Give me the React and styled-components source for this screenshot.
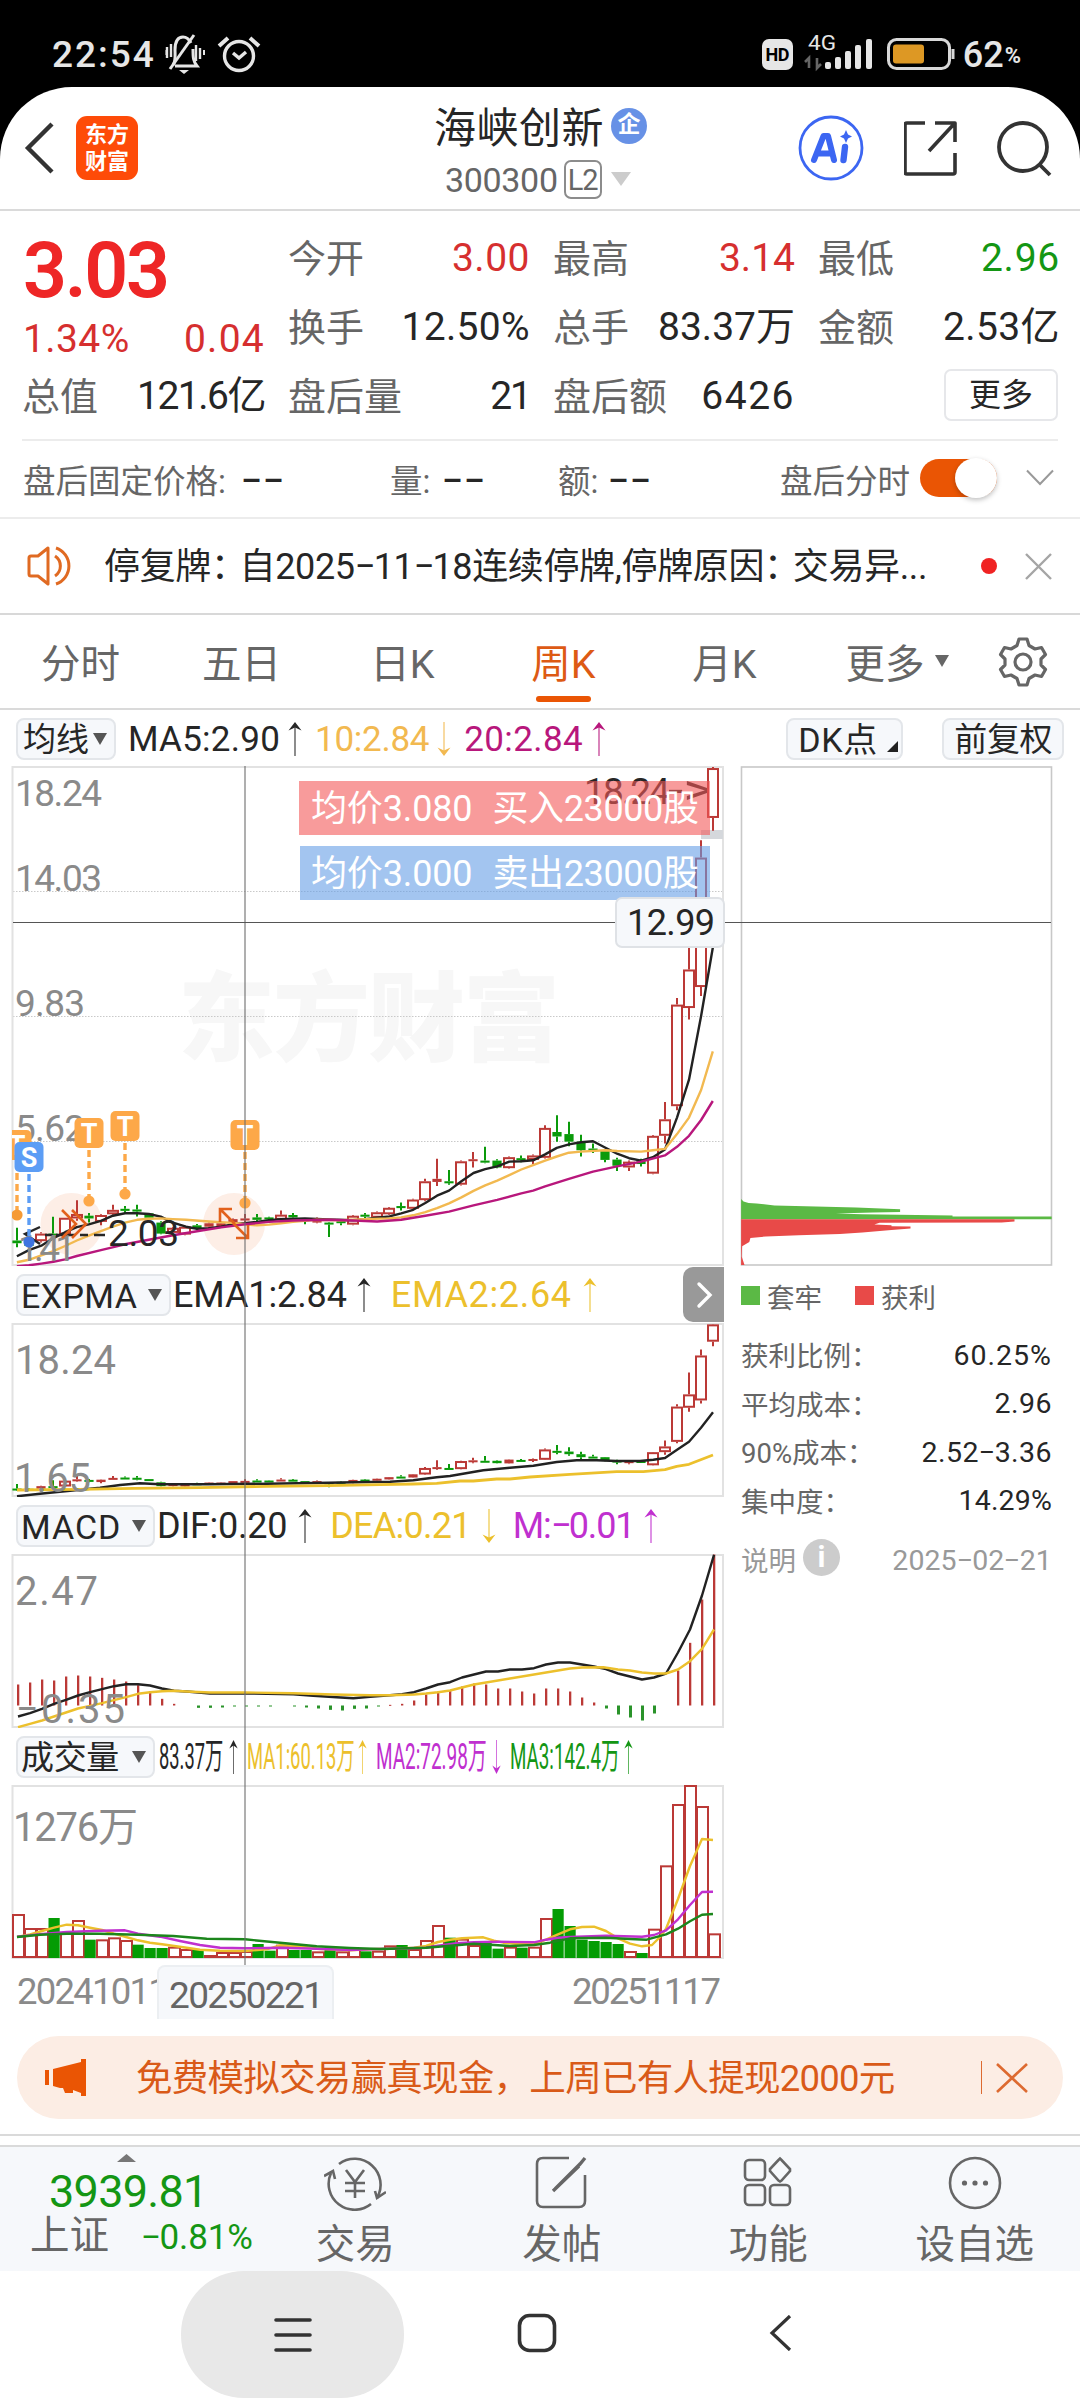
import React, { useLayoutEffect, useRef, useState } from 'react';
import styled, { createGlobalStyle, css } from 'styled-components';

const C = {
  ink: '#262626', gray: '#666', mute: '#8a8a8a', red: '#d62f2f', green: '#149614',
  orange: '#ea5504', amber: '#f2b950', magenta: '#b8177c', yellow: '#ecc02c', violet: '#c030cf',
  candleRed: '#bb3936', candleGreen: '#0a9a0a', panel: '#f6f8fb', frame: '#e2e2e2',
};

const Global = createGlobalStyle`
  * { box-sizing: border-box; }
  html, body { margin: 0; background: #fff; }
  body, text { font-family: Roboto, "Noto Sans CJK SC", sans-serif; }
`;

/* ---------- text helpers ---------- */
const FitOuter = styled.span`
  display: inline-block; white-space: nowrap; flex: none;
  font-size: ${p => p.$size}px; line-height: ${p => p.$lh || 1.2};
  font-weight: ${p => p.$weight || 400};
  color: ${p => p.$color || 'inherit'};
  padding-top: ${p => p.$drop ?? 3}px;
  margin-left: ${p => p.$ml || 0}px;
  margin-right: ${p => p.$mr || 0}px;
  ${p => p.$squeeze && css`width: ${p.$w}px;`}
`;
const FitInner = styled.span`display: inline-block; transform-origin: 0 50%; white-space: nowrap;`;

function Fit({ w, size, children, squeeze, ...rest }) {
  const ref = useRef(null);
  const [style, setStyle] = useState({});
  useLayoutEffect(() => {
    const el = ref.current;
    const natural = el.offsetWidth;
    const n = el.textContent.length;
    setStyle(squeeze ? { transform: `scaleX(${w / natural})` } : { letterSpacing: `${(w - natural) / n}px` });
  }, [w, squeeze]);
  return (
    <FitOuter
      $size={size} $w={w} $squeeze={squeeze} $color={rest.color} $ml={rest.ml} $mr={rest.mr}
      $weight={rest.weight} $lh={rest.lh} $drop={rest.drop}
    >
      <FitInner ref={ref} style={style}>{children}</FitInner>
    </FitOuter>
  );
}

const DashGlyph = styled.span`
  display: inline-block; transform: translateY(-0.06em) scaleX(1.75); margin: 0 .12em 0 .14em;
`;
const Dash = () => <DashGlyph>-</DashGlyph>;
const TightColon = styled.span`margin-right: -7px;`;

/* ---------- shell ---------- */
const Page = styled.div`width: 1080px; height: 2400px; background: #000; overflow: hidden; display: flex; flex-direction: column;`;
const StatusBar = styled.header`
  height: 87px; flex: none; color: #e6e6e6; display: flex; justify-content: space-between; align-items: flex-start;
  padding: 31px 56px 0 52px;
`;
const StatusGroup = styled.div`display: flex; align-items: center; height: 46px;`;
const Sheet = styled.main`flex: 1; background: #fff; border-radius: 72px 72px 0 0; display: flex; flex-direction: column;`;

const HdBadge = styled.span`
  width: 31px; height: 31px; border-radius: 7px; background: #e6e6e6; color: #000; font-weight: 700; font-size: 18px;
  display: flex; align-items: center; justify-content: center; letter-spacing: -.3px;
`;

/* ---------- header ---------- */
const Header = styled.div`
  height: 124px; border-bottom: 2px solid #dadada; display: grid; grid-template-columns: 360px 1fr 360px; flex: none;
`;
const HeaderLeft = styled.div`display: flex; align-items: center; padding: 0 0 0 22px; gap: 20px;`;
const Logo = styled.div`
  width: 62px; height: 64px; border-radius: 11px; background: #fe4b08; color: #fff; font-weight: 700; font-size: 22px; line-height: 27px;
  display: flex; flex-direction: column; align-items: center; justify-content: center;
`;
const HeaderMid = styled.div`padding-top: 19px; padding-left: 74px;`;
const TitleRow = styled.div`display: flex; align-items: center; height: 44px; gap: 7px; color: ${C.ink};`;
const Verified = styled.span`
  width: 36px; height: 36px; border-radius: 50%; background: #6791e6; color: #fff; font-weight: 700; font-size: 23px;
  line-height: 34px; text-align: center; margin-top: -4px;
`;
const CodeRow = styled.div`display: flex; align-items: center; height: 58px; padding: 0 0 0 11px; color: ${C.gray};`;
const Level = styled.span`
  width: 38px; height: 39px; border: 2px solid #8c8c8c; border-radius: 7px; font-size: 29px; line-height: 36px; text-align: center;
  margin: 0 9px 0 6px; letter-spacing: -1px;
`;
const HeaderRight = styled.div`display: flex; align-items: center; padding-left: 78px; gap: 40px;`;

/* ---------- quote ---------- */
const Quote = styled.section`
  height: 230px; margin: 0 22px; padding-top: 11px; border-bottom: 2px solid #ececec; flex: none;
  display: grid; grid-template-columns: 241px 240px 240px 240px; column-gap: 25px; grid-template-rows: 69px 69px 69px;
`;
const Cell = styled.div`display: flex; justify-content: space-between; align-items: center; font-size: 38px; color: ${C.gray}; white-space: nowrap; padding-bottom: 2px;`;
const PriceCell = styled.div`grid-row: 1 / 3; display: flex; flex-direction: column; color: ${C.red};`;
const PriceMain = styled.div`height: 92px; display: flex; align-items: center; color: #ee2626;`;
const PriceSub = styled.div`height: 46px; display: flex; align-items: center; justify-content: space-between;`;
const MoreBtn = styled.button`
  margin: 0 0 0 auto; width: 114px; height: 52px; border: 2px solid #e6e7ea; border-radius: 7px; background: #fff; color: ${C.ink};
  font: 32px/46px Roboto, "Noto Sans CJK SC", sans-serif; padding: 0; position: relative; top: 1px;
`;

const AfterHours = styled.section`
  height: 78px; border-bottom: 2px solid #ececec; display: grid; align-items: center; flex: none; font-size: 32.5px; color: ${C.gray};
  grid-template-columns: 367px 168px 222px 140px 106px 1fr; padding: 0 0 2px 23px; white-space: nowrap;
`;
const Blank = styled.b`color: ${C.ink}; font-weight: 500; font-size: 35px; line-height: 30px; margin-left: ${p => p.$gap}px; letter-spacing: 1px;`;
const Toggle = styled.div`
  width: 77px; height: 38px; border-radius: 19px; background: ${C.orange}; display: flex; justify-content: flex-end; align-items: center;
`;
const Knob = styled.div`width: 42px; height: 40px; border-radius: 50%; background: #fff; box-shadow: 0 2px 5px rgba(0,0,0,.25);`;

const Notice = styled.section`
  height: 96px; border-bottom: 2px solid #d8d8d8; display: flex; align-items: center; flex: none; padding-left: 26px; color: ${C.ink};
`;
const RedDot = styled.i`width: 16px; height: 16px; border-radius: 50%; background: #f02323; margin: 0 28px 0 54px;`;

const Tabs = styled.nav`
  height: 95px; border-bottom: 2px solid #dadada; display: grid; grid-template-columns: repeat(5, 161px) 184px 1fr; flex: none;
`;
const Tab = styled.div`
  position: relative; display: flex; align-items: center; justify-content: center; gap: 10px; font-size: 39.5px; padding-bottom: 2px;
  color: ${p => (p.$active ? '#dd5a14' : C.gray)};
  &::after { content: ''; display: ${p => (p.$active ? 'block' : 'none')}; position: absolute; bottom: 6px; left: 53px; width: 55px; height: 6px; border-radius: 3px; background: ${C.orange}; }
`;
const TabIcon = styled.div`display: flex; align-items: center; padding-left: 9px;`;

/* ---------- chart area ---------- */
const MaRow = styled.div`height: 56px; display: flex; align-items: center; padding: 1px 0 0 16px; flex: none;`;
const Pill = styled.span`
  height: 42px; width: ${p => p.$w}px; background: ${C.panel}; border: 2px solid #e3e6ea; border-radius: 8px; flex: none;
  display: flex; align-items: center; justify-content: space-between; padding: 0 ${p => p.$pr ?? 7}px 0 ${p => p.$pl ?? 3}px;
  margin-left: ${p => p.$ml || 0}px; color: ${C.ink};
`;
const ChartArea = styled.section`position: relative; height: 1253px; display: flex; flex: none;`;
const LeftCol = styled.div`width: 724px; display: flex; flex-direction: column;`;
const IndRow = styled.div`height: 57px; display: flex; align-items: center; padding: 0 0 0 16px; flex: none;`;
const Plot = styled.svg`display: block; flex: none; overflow: hidden;`;
const RightCol = styled.aside`width: 356px; padding-left: 16px;`;
const Legend = styled.div`display: flex; align-items: center; height: 59px; color: ${C.gray}; font-size: 27.5px; padding-left: 1px;`;
const Swatch = styled.i`width: 19px; height: 19px; background: ${p => p.$c}; margin: 0 7px 0 ${p => p.$ml || 0}px;`;
const Stat = styled.div`
  display: flex; align-items: center; justify-content: space-between; height: 48.5px; width: 312px; font-size: 27.5px;
  color: ${p => p.$c || C.gray}; padding-left: 1px; white-space: nowrap;
`;
const StatBlock = styled.div`padding-top: 5px;`;
const StatFoot = styled.div`padding-top: 11px;`;
const InfoLabel = styled.span`display: flex; align-items: center; gap: 7px;`;
const InfoDot = styled.i`
  width: 37px; height: 37px; border-radius: 50%; background: #ccc; color: #fff; font: 700 30px/36px Roboto, sans-serif; text-align: center; margin-top: -4px;
`;

const VLine = styled.div`position: absolute; left: 244px; top: 0; width: 2px; height: 1199px; background: rgba(110,110,110,.55);`;
const HLine = styled.div`position: absolute; left: 13px; top: 156px; width: 1038px; height: 1px; background: #555;`;
const TradeFlag = styled.div`
  position: absolute; left: ${p => p.$x}px; top: ${p => p.$y}px; width: ${p => 710 - p.$x}px; height: 54px; padding-left: ${p => 311 - p.$x}px;
  background: ${p => p.$bg}; color: #fff; display: flex; align-items: center;
`;
const PriceTag = styled.div`
  position: absolute; left: 615px; top: 131px; width: 110px; height: 51px; border: 2px solid #dfe2e6; border-radius: 7px; background: ${C.panel};
  display: flex; align-items: center; padding-left: 10px; color: ${C.ink};
`;
const NextBtn = styled.div`
  position: absolute; left: 683px; top: 501px; width: 41px; height: 55px; background: #999; border-radius: 10px 0 0 10px;
  display: flex; align-items: center; justify-content: center;
`;
const Dates = styled.div`height: 60px; padding: 2px 5px 0 17px; display: flex; justify-content: space-between; align-items: center; color: ${C.mute};`;
const DateTag = styled.div`
  position: absolute; left: 157px; top: 1199px; width: 177px; height: 54px; border: 2px solid #eceff2; border-bottom: 0; border-radius: 8px 8px 0 0;
  background: ${C.panel}; display: flex; align-items: center; padding: 3px 0 0 10px; color: ${C.gray};
`;

/* ---------- footer ---------- */
const Promo = styled.div`
  margin: 17px 17px 0; height: 83px; border-radius: 42px; background: #fcede4; flex: none; display: flex; align-items: center; padding-left: 28px;
`;
const Divider = styled.i`width: 1px; height: 33px; background: #dd6a30; margin: 0 14px 0 86px;`;
const Strip = styled.div`height: 13px; margin-top: 15px; border-top: 2px solid #dadada; border-bottom: 2px solid #dadada; flex: none;`;
const BottomBar = styled.footer`height: 124px; background: ${C.panel}; display: grid; grid-template-columns: 252px repeat(4, 206.5px); flex: none;`;
const IndexBox = styled.div`padding: 7px 0 0 0; display: flex; flex-direction: column;`;
const IndexCaret = styled.div`height: 8px; padding-left: 117px; display: flex;`;
const IndexVal = styled.div`height: 52px; display: flex; align-items: center; padding: 5px 0 0 49px;`;
const IndexRow = styled.div`
  display: flex; align-items: center; height: 44px; padding: 0 0 0 30px; color: ${C.gray}; font-size: 39.5px; line-height: 44px; white-space: nowrap;
`;
const NavItem = styled.div`
  display: flex; flex-direction: column; align-items: center; color: ${C.gray}; font-size: 39.5px; line-height: 44px; padding-top: 8px;
  svg { height: 56px; margin-bottom: 12px; flex: none; }
`;
const SysNav = styled.div`height: 130px; background: #fff; display: flex; flex: none; padding-left: 181px;`;
const SysPill = styled.div`
  width: 223px; height: 127px; border-radius: 63px; background: #e8e8e8; display: flex; align-items: center; justify-content: center;
`;
const SysKey = styled.div`width: ${p => p.$w}px; height: 124px; display: flex; align-items: center; justify-content: center;`;

/* ---------- small drawings ---------- */
const Down = ({ w = 14, h = 12, c = '#555' }) => <svg width={w} height={h} viewBox="0 0 14 12" preserveAspectRatio="none"><path d="M0 0H14L7 12Z" fill={c} /></svg>;

const ArrowBox = styled.svg`flex: none; margin-left: ${p => p.$ml}px;`;
const Arrow = ({ ml, dir = 'up', c = C.ink, w = 14 }) => (
  <ArrowBox $ml={ml} width={w} height="34" viewBox="0 0 14 34" preserveAspectRatio="none">
    <g transform={dir === 'up' ? undefined : 'rotate(180 7 17)'}>
      <path d="M7 2V34" stroke={c} strokeWidth="1.4" opacity=".75" />
      <path d="M0.5 8.5L7 0L13.5 8.5L7 5.5Z" fill={c} />
    </g>
  </ArrowBox>
);
const Cross = ({ w, h, c, sw = 2.4 }) => (
  <svg width={w} height={h} viewBox={`0 0 ${w} ${h}`}><path d={`M1 1L${w - 1} ${h - 1}M${w - 1} 1L1 ${h - 1}`} stroke={c} strokeWidth={sw} /></svg>
);

/* ---------- data ---------- */
// [colour, bodyTop, bodyBottom, high, low] in ticks: 47 is the top price, 1495 the bottom price
const CANDLES = [
  ['g',1422,1430,1385,1442],['g',1424,1438,1420,1440],['r',1402,1424,1398,1428],['g',1402,1408,1353,1412],['r',1356,1405,1356,1405],
  ['r',1345,1358,1305,1365],['g',1350,1358,1342,1370],['r',1348,1368,1346,1378],['r',1333,1346,1318,1348],['g',1330,1336,1322,1342],
  ['g',1332,1338,1318,1352],['g',1343,1356,1343,1358],['g',1370,1402,1366,1404],['r',1385,1400,1383,1402],['r',1382,1405,1380,1407],
  ['g',1378,1388,1374,1390],['r',1372,1382,1370,1386],['r',1372,1380,1370,1382],['r',1360,1372,1358,1374],['r',1358,1364,1345,1375],
  ['g',1355,1362,1345,1368],['g',1355,1360,1353,1363],['r',1347,1362,1335,1364],['g',1348,1355,1342,1358],['g',1360,1364,1358,1375],
  ['r',1360,1370,1355,1372],['g',1370,1375,1368,1412],['g',1366,1370,1362,1378],['r',1350,1376,1348,1378],['g',1347,1353,1342,1358],
  ['r',1340,1356,1338,1358],['r',1327,1346,1325,1348],['g',1322,1328,1312,1335],['r',1303,1330,1301,1332],['r',1250,1305,1243,1308],
  ['r',1243,1252,1185,1264],['g',1250,1256,1217,1260],['r',1192,1260,1190,1262],['r',1186,1191,1165,1210],['g',1190,1196,1150,1198],
  ['g',1190,1210,1186,1212],['r',1180,1212,1178,1214],['g',1183,1188,1175,1195],['r',1175,1188,1172,1200],['r',1095,1182,1087,1184],
  ['g',1107,1120,1058,1135],['g',1113,1135,1077,1148],['g',1135,1160,1115,1178],['g',1155,1159,1140,1168],['g',1160,1188,1158,1195],
  ['g',1187,1205,1182,1220],['r',1193,1210,1190,1220],['g',1192,1200,1185,1207],['r',1118,1228,1116,1230],['r',1070,1118,1020,1140],
  ['r',737,1032,718,1044],['r',635,747,453,780],['r',310,686,260,712],['r',50,195,47,232],
];
const MA5 = [49,1468,84,1450,120,1437,155,1415,189,1398,223,1383,258,1375,293,1365,328,1350,363,1343,398,1343,432,1345,467,1353,502,1370,540,1382,572,1388,607,1386,642,1382,677,1375,711,1372,746,1368,781,1363,816,1360,885,1358,955,1361,1025,1363,1060,1360,1095,1356,1131,1352,1165,1343,1200,1333,1235,1313,1269,1292,1304,1277,1340,1250,1375,1226,1409,1215,1444,1207,1479,1193,1514,1192,1548,1189,1583,1172,1617,1153,1652,1143,1687,1137,1722,1134,1757,1152,1792,1170,1827,1183,1862,1190,1896,1180,1931,1158,1966,1065,2001,955,2036,770,2070,572];
const MA10 = [49,1485,84,1478,120,1465,155,1453,189,1438,223,1422,258,1408,293,1395,328,1382,363,1370,398,1362,432,1359,467,1358,502,1360,540,1362,607,1367,677,1371,711,1375,746,1378,781,1376,816,1372,851,1368,920,1362,990,1363,1060,1360,1131,1358,1165,1355,1200,1349,1235,1340,1269,1328,1304,1314,1340,1297,1375,1278,1409,1262,1444,1248,1479,1232,1514,1216,1548,1203,1583,1190,1617,1178,1652,1167,1687,1164,1757,1160,1792,1162,1862,1164,1896,1160,1931,1156,1966,1113,2001,1065,2036,985,2070,873];
const MA20 = [49,1497,84,1494,120,1489,155,1484,189,1477,223,1467,293,1450,363,1433,432,1420,502,1407,572,1395,642,1384,711,1375,781,1368,851,1364,955,1362,1025,1364,1095,1367,1165,1362,1235,1350,1304,1338,1375,1320,1444,1304,1514,1285,1548,1277,1583,1265,1652,1243,1722,1222,1792,1207,1862,1193,1931,1175,1966,1150,2001,1118,2036,1072,2070,1017];
const EMA1 = [51,706,120,698,180,692,240,686,300,680,360,672,420,667,480,670,620,670,800,668,985,665,1110,663,1170,662,1240,658,1310,649,1350,645,1450,628,1530,620,1600,614,1670,603,1730,598,1790,598,1850,600,1920,600,1960,596,1995,591,2030,567,2067,542,2103,500,2139,454];
const EMA2 = [51,687,240,685,400,682,600,680,800,676,985,674,1140,671,1240,669,1310,667,1380,660,1420,660,1490,654,1530,654,1590,648,1710,640,1850,632,1930,632,1995,626,2030,616,2067,610,2139,582];
const HIST = [102,96,87,90,78,75,78,82,87,93,104,122,145,160,165,172,172,171,168,167,167,167,165,167,171,174,178,180,175,174,168,163,160,150,132,123,120,108,99,102,114,114,123,129,114,114,123,141,156,174,192,201,210,189,165,60,-23,-153,-288];
const DIF = [54,198,90,188,126,175,162,160,198,148,234,135,270,125,306,116,342,107,378,101,414,101,450,105,486,114,522,121,560,123,630,129,735,129,880,131,940,136,1010,140,1060,143,1110,139,1170,134,1206,131,1242,125,1278,114,1314,102,1350,95,1386,81,1422,72,1458,63,1494,63,1530,57,1566,57,1602,53,1638,42,1674,36,1710,36,1746,42,1782,48,1818,56,1854,69,1890,78,1926,87,1962,81,1998,69,2034,6,2070,-63,2106,-165,2142,-287];
const DEA = [54,230,90,220,126,210,162,198,198,186,234,174,270,166,306,158,342,149,378,140,414,130,450,125,486,122,522,121,560,123,630,126,735,126,880,128,1000,132,1110,134,1170,134,1242,132,1278,129,1314,125,1350,120,1386,111,1422,102,1458,96,1530,84,1602,72,1674,60,1710,54,1746,51,1810,50,1854,57,1890,60,1926,66,1962,69,1998,69,2034,57,2070,32,2106,-5,2142,-63];
const VOL = 'r792 r834 r834 g801 r848 r810 g866 r868 r862 r870 g881 g891 g891 r890 r897 g897 r915 r906 r906 r903 g879 g899 r884 g897 g897 r904 g897 r904 r897 g901 r902 r886 g882 r897 r870 r825 g860 r866 r885 g875 g893 r890 g890 r890 r804 g774 g825 g866 g870 g873 g879 r903 g906 r836 r646 r462 r405 r468 r850'
  .split(' ').map(s => [s[0], +s.slice(1)]);
const V1 = [51,858,90,850,126,840,162,830,200,821,234,823,270,830,306,837,342,848,378,858,414,868,450,875,486,880,560,890,600,896,660,899,735,900,800,895,840,883,900,886,950,893,1050,898,1110,895,1170,893,1242,890,1278,885,1314,873,1350,866,1386,862,1450,859,1482,869,1510,875,1560,880,1602,880,1638,866,1674,850,1710,835,1746,828,1782,827,1818,840,1854,862,1890,878,1926,886,1956,882,1980,858,1998,833,2034,744,2070,645,2106,564,2139,567];
const V2 = [51,857,120,850,200,843,300,839,375,838,414,848,480,857,540,870,600,882,660,890,735,892,840,890,950,893,1050,897,1110,895,1170,893,1278,890,1314,884,1370,877,1422,874,1494,872,1602,874,1638,866,1674,860,1710,858,1818,854,1926,857,1962,852,1998,838,2034,805,2070,762,2106,723,2139,722];
const V3 = [51,858,120,851,200,848,300,848,414,851,520,855,620,863,735,865,840,875,950,886,1050,891,1140,894,1170,893,1278,890,1386,881,1422,878,1482,882,1530,885,1602,882,1650,875,1710,862,1818,860,1890,864,1940,866,1998,850,2034,833,2070,811,2106,791,2139,789];

const K = 2.904;
const cx = i => 17 + i * 12;
const line = (pts, sx, y) => {
  let s = '';
  for (let i = 0; i < pts.length; i += 2) s += `${(pts[i] / sx).toFixed(1)},${y(pts[i + 1]).toFixed(1)} `;
  return s;
};
const Line = ({ pts, sx, y, c, w = 2.4 }) => <polyline points={line(pts, sx, y)} fill="none" stroke={c} strokeWidth={w} strokeLinejoin="round" />;
const Frame = ({ h }) => <rect x="12.5" y="1" width="710.5" height={h - 2} fill="none" stroke={C.frame} strokeWidth="2" />;

function Candles({ y }) {
  return CANDLES.map(([k, a, b, hi, lo], i) => {
    const c = k === 'r' ? C.candleRed : C.candleGreen;
    const top = y(a), bot = Math.max(y(b), top + 2), x = cx(i);
    const hollow = k === 'r' && bot - top > 4.2;
    return (
      <g key={i} stroke={c} strokeWidth="2">
        {y(hi) < top && <path d={`M${x} ${y(hi)}V${top}`} />}
        {y(lo) > bot && <path d={`M${x} ${bot}V${y(lo)}`} />}
        {hollow
          ? <rect x={x - 5} y={top + 1} width="10" height={bot - top - 2} fill="#fff" />
          : <rect x={x - 4.6} y={top} width="9.2" height={bot - top} fill={c} stroke="none" />}
      </g>
    );
  });
}

const SvgText = ({ x, y, w, size, c = C.mute, children, ...o }) => (
  <text x={x} y={y} fontSize={size} fill={c} textLength={w} lengthAdjust="spacing" {...o}>{children}</text>
);

function Marker({ x, y, dot, t = 'T', c = '#fda848', dc = c }) {
  return (
    <g>
      <path d={`M${x} ${y + 17}V${dot}`} stroke={c} strokeWidth="3.4" strokeDasharray="7 4" />
      <circle cx={x} cy={dot} r="5.6" fill={dc} />
      <rect x={x - 14.5} y={y - 15} width="29" height="30" rx="5" fill={c} />
      <text x={x} y={y + 9.5} fontSize="27" fontWeight="700" fill="#fff" textAnchor="middle">{t}</text>
    </g>
  );
}

function PriceChart() {
  const y = v => (v - 47) / K + 1;
  return (
    <Plot width="724" height="500" viewBox="0 0 724 500">
      <text x="178" y="287" fontSize="97" fontWeight="900" fill="#f7f7f7" textLength="382">东方财富</text>
      {[125, 250, 375].map(v => <path key={v} d={`M13 ${v + 0.5}H722`} stroke="#c9c9c9" strokeWidth="1" strokeDasharray="1.5 1.5" />)}
      <Frame h={500} />
      <SvgText x="15" y="40" w={87} size={37}>18.24</SvgText>
      <SvgText x="15" y="125" w={87} size={37}>14.03</SvgText>
      <SvgText x="15" y="249.5" w={70} size={37}>9.83</SvgText>
      <SvgText x="15" y="374.5" w={70} size={37}>5.62</SvgText>
      <circle cx="71.5" cy="458" r="31" fill="#fdeee6" />
      <circle cx="234" cy="458" r="31" fill="#fdeee6" />
      <rect x="701" y="64" width="22" height="9" fill="#d5d8dc" />
      <SvgText x="584" y="38" w={86} size={37} c={C.ink}>18.24</SvgText>
      <text x="668" y="38" fontSize="43" fill={C.ink} textLength="44" lengthAdjust="spacingAndGlyphs">-&gt;</text>
      <Candles y={y} />
      <Line pts={MA5} sx={K} y={y} c="#222" />
      <Line pts={MA10} sx={K} y={y} c={C.amber} />
      <Line pts={MA20} sx={K} y={y} c={C.magenta} w={2.4} />
      <path d="M40 461L25 468L40 478M45 469H53M56 469H75M80 469H88M94 469H105" fill="none" stroke={C.ink} strokeWidth="2.4" />
      <SvgText x="108" y="480" w={71} size={37} c={C.ink}>2.03</SvgText>
      <SvgText x="18" y="495" w={58} size={37}>1.41</SvgText>
      <g fill="none" stroke="#e2611c" strokeWidth="2.6">
        <path d="M62 444L76 458L62 472M72 444L86 458L72 472" />
        <path d="M220 456V443H232M221 444L235 458M248 459V472H236M247 471L233 457" />
      </g>
      <svg x="12" y="0" width="712" height="500" viewBox="12 0 712 500">
        <Marker x={17} y={379} dot={449} dc="#f59a35" />
      </svg>
      <Marker x={29} y={391} dot={476} t="S" c="#5c9df5" dc="#3f74e0" />
      <Marker x={89} y={367} dot={435} />
      <Marker x={125} y={360} dot={428} />
      <Marker x={245} y={369} dot={437} />
    </Plot>
  );
}

function ExpmaChart() {
  const y = v => (v - 189) / 3 + 1;
  return (
    <Plot width="724" height="174" viewBox="0 0 724 174">
      <Frame h={174} />
      <SvgText x="15" y="51" w={101} size={40}>18.24</SvgText>
      <Candles y={v => ((v - 47) / K) * 0.3475 + 1} />
      <Line pts={EMA1} sx={3} y={y} c="#222" />
      <Line pts={EMA2} sx={3} y={y} c={C.yellow} w={2.8} />
      <SvgText x="14" y="169" w={77} size={40}>1.65</SvgText>
    </Plot>
  );
}

function MacdChart() {
  const y = v => v / 3 + 96.5;
  return (
    <Plot width="724" height="174" viewBox="0 0 724 174">
      <Frame h={174} />
      <SvgText x="15" y="51" w={83} size={40}>2.47</SvgText>
      {HIST.map((v, i) => v !== 165 && (
        <rect key={i} x={cx(i)} y={Math.min(y(v), 151.5)} width={v > 165 ? 3 : 2.3} height={Math.max(1, Math.abs(y(v) - 151.5))}
          fill={v < 165 ? C.candleRed : '#2a932a'} />
      ))}
      <Line pts={DIF} sx={3} y={y} c="#222" />
      <Line pts={DEA} sx={3} y={y} c={C.yellow} w={2.4} />
      <SvgText x="16" y="168.5" w={109} size={40}>−0.35</SvgText>
    </Plot>
  );
}

function VolumeChart() {
  const y = v => (v - 405) / 3 + 1;
  return (
    <Plot width="724" height="174" viewBox="0 0 724 174">
      <Frame h={174} />
      <SvgText x="13" y="56" w={125} size={40}>1276万</SvgText>
      {VOL.map(([k, v], i) => k === 'r'
        ? <rect key={i} x={cx(i) - 4} y={y(v)} width="11" height={172 - y(v)} fill="#fff" stroke={C.candleRed} strokeWidth="2" />
        : <rect key={i} x={cx(i) - 4.5} y={y(v)} width="11.2" height={173 - y(v)} fill="#049c04" />)}
      <Line pts={V1} sx={3} y={y} c={C.yellow} />
      <Line pts={V2} sx={3} y={y} c={C.violet} />
      <Line pts={V3} sx={3} y={y} c="#1c861c" />
    </Plot>
  );
}

const GREEN_CHIPS = [583,1303,590,1310,605,1315,628,1316,680,1322,800,1325,917,1328,1045,1333,1045,1341,965,1342,858,1345,935,1347,1197,1351,1197,1354,1485,1354,1485,1362,583,1362];
const RED_CHIPS = [583,1362,1377,1362,1377,1368,1340,1371,985,1372,970,1377,1020,1379,1020,1382,1075,1383,1075,1389,1020,1393,935,1400,870,1405,750,1408,655,1412,610,1416,607,1428,586,1440,585,1470,593,1495,583,1495];
function ChipChart() {
  const map = p => { let s = ''; for (let i = 0; i < p.length; i += 2) s += `${(p[i] / K - 199.7).toFixed(1)},${((p[i + 1] - 47) / K + 0.5).toFixed(1)} `; return s; };
  return (
    <Plot width="313" height="500" viewBox="0 0 313 500">
      <rect x="1.5" y="1" width="310" height="498" fill="none" stroke="#c8c8c8" strokeWidth="1.6" />
      <polygon points={map(GREEN_CHIPS)} fill="#5bb945" />
      <polygon points={map(RED_CHIPS)} fill="#e84a48" />
    </Plot>
  );
}

/* ---------- sections ---------- */
function Status() {
  return (
    <StatusBar>
      <StatusGroup>
        <Fit w={104} size={37} weight={500}>22:54</Fit>
        <svg width="50" height="42" viewBox="-2 0 50 42" fill="none" stroke="#e6e6e6" strokeWidth="3">
          <path d="M15 32C18 28 17 22 17 17C17 8 20 4 25 4C29 4 31 6 33 10M35 16C35 24 35 28 39 33H17" />
          <path d="M36 2L12 36" />
          <path d="M21 37H31L26 41Z" fill="#e6e6e6" stroke="none" />
          <path d="M9 14V25M13 11V24M38 12V28M42 15V26" strokeWidth="2.4" /><path d="M8.5 17V22M46 17V22" strokeWidth="2" />
        </svg>
        <svg width="60" height="42" viewBox="-2 0 60 42" fill="none" stroke="#e6e6e6" strokeWidth="3.4">
          <circle cx="31" cy="23" r="14.5" /><path d="M25 20L31 25L38 19" /><path d="M11 13L20 5M51 13L42 5" strokeWidth="4" />
        </svg>
      </StatusGroup>
      <StatusGroup>
        <HdBadge>HD</HdBadge>
        <svg width="94" height="46" viewBox="0 0 94 46">
          <text x="15" y="19" fontSize="21" fill="#e6e6e6" textLength="28" lengthAdjust="spacingAndGlyphs">4G</text>
          <path d="M16 37V27L12 31M24 27V37L28 33" stroke="#666" strokeWidth="2.6" fill="none" />
          {[[32, 31], [42, 26], [52, 20], [62, 14], [73, 8]].map(([x, y]) => <rect key={x} x={x} y={y} width="6" height={38 - y} rx="2" fill="#e6e6e6" />)}
        </svg>
        <svg width="76" height="32" viewBox="0 0 76 32">
          <rect x="1.5" y="1.5" width="61" height="29" rx="8" fill="none" stroke="#d8d8d8" strokeWidth="3" />
          <rect x="6" y="6.5" width="31" height="19" rx="3" fill="#dd9824" /><path d="M66 11V21" stroke="#d8d8d8" strokeWidth="3" />
        </svg>
        <Fit w={41} size={36} weight={500}>62</Fit>
        <Fit w={19} size={22} weight={700} ml={1} lh={2.05}>%</Fit>
      </StatusGroup>
    </StatusBar>
  );
}

function Head() {
  return (
    <Header>
      <HeaderLeft>
        <svg width="34" height="54" viewBox="0 0 34 54"><path d="M30 3L6 27L30 51" fill="none" stroke="#333" strokeWidth="4.4" /></svg>
        <Logo><span>东方</span><span>财富</span></Logo>
      </HeaderLeft>
      <HeaderMid>
        <TitleRow><Fit w={170} size={42}>海峡创新</Fit><Verified>企</Verified></TitleRow>
        <CodeRow><Fit w={113} size={34}>300300</Fit><Level>L2</Level><Down w={20} h={14} c="#ccc" /></CodeRow>
      </HeaderMid>
      <HeaderRight>
        <svg width="66" height="66" viewBox="0 0 66 66">
          <circle cx="33" cy="33" r="31" fill="#fff" stroke="#3c66f2" strokeWidth="2.8" />
          <path d="M16 45L25.5 21H30L36 45M19.5 38.5H33" fill="none" stroke="#3c66f2" strokeWidth="6" strokeLinejoin="round" strokeLinecap="round" />
          <path d="M47 32L45.500 45" fill="none" stroke="#3c66f2" strokeWidth="6.4" strokeLinecap="round" />
          <path d="M48 15L50 19.500L54 21.500L50 23.500L48 28L46 23.500L42 21.500L46 19.500Z" fill="#3c66f2" />
        </svg>
        <svg width="53" height="56" viewBox="1 0 53 56" fill="none" stroke="#333" strokeWidth="3.6" strokeLinejoin="round">
          <path d="M22 3H4Q2 3 2 5V52Q2 54 4 54H50Q52 54 52 52V33" /><path d="M32 3H52V22M51 4L26 31" />
        </svg>
        <svg width="58" height="58" viewBox="1 0 58 58" fill="none" stroke="#333" strokeWidth="3.8">
          <circle cx="27" cy="28" r="24" /><path d="M43 45L54 56" />
        </svg>
      </HeaderRight>
    </Header>
  );
}

const Num = ({ w, c = C.ink, ml, mr = -2 }) => null;
const Value = ({ w, c = C.ink, ml, mr = -2, children }) => <Fit w={w} size={39} color={c} ml={ml} mr={mr} drop={5}>{children}</Fit>;

function QuoteBlock() {
  return (
    <Quote>
      <PriceCell>
        <PriceMain><Fit w={145} size={77} weight={600} ml={1} drop={7}>3.03</Fit></PriceMain>
        <PriceSub><Value w={107} ml={1} c={C.red}>1.34%</Value><Value w={81} c={C.red}>0.04</Value></PriceSub>
      </PriceCell>
      <Cell>今开<Value w={78} c={C.red}>3.00</Value></Cell>
      <Cell>最高<Value w={76} c={C.red}>3.14</Value></Cell>
      <Cell>最低<Value w={79} c={C.green}>2.96</Value></Cell>
      <Cell>换手<Value w={129}>12.50%</Value></Cell>
      <Cell>总手<Value w={137}>83.37万</Value></Cell>
      <Cell>金额<Value w={117}>2.53亿</Value></Cell>
      <Cell>总值<Value w={128}>121.6亿</Value></Cell>
      <Cell>盘后量<Value w={40}>21</Value></Cell>
      <Cell>盘后额<Value w={94}>6426</Value></Cell>
      <Cell><MoreBtn>更多</MoreBtn></Cell>
    </Quote>
  );
}

const Empty = ({ gap = 12 }) => <Blank $gap={gap}><Dash /><Dash /></Blank>;

function Charts() {
  return (
    <>
      <MaRow>
        <Pill $w={100} $pl={5}><Fit w={66} size={33}>均线</Fit><Down /></Pill>
        <Fit w={152} size={35} ml={12} color={C.ink}>MA5:2.90</Fit><Arrow ml={8} />
        <Fit w={114} size={35} ml={13} color={C.amber}>10:2.84</Fit><Arrow ml={8} dir="down" c={C.amber} />
        <Fit w={119} size={35} ml={13} color={C.magenta}>20:2.84</Fit><Arrow ml={9} c={C.magenta} />
        <Pill $w={117} $ml={180} $pl={10} $pr={3}>
          <Fit w={80} size={34}>DK点</Fit>
          <svg width="11" height="26"><path d="M11 15V26H0Z" fill="#222" /></svg>
        </Pill>
        <Pill $w={122} $ml={39} $pl={10}><Fit w={98} size={33}>前复权</Fit></Pill>
      </MaRow>
      <ChartArea>
        <LeftCol>
          <PriceChart />
          <IndRow>
            <Pill $w={155}><Fit w={116} size={34}>EXPMA</Fit><Down /></Pill>
            <Fit w={174} size={36} ml={2} color={C.ink}>EMA1:2.84</Fit><Arrow ml={10} />
            <Fit w={181} size={36} ml={20} color={C.yellow}>EMA2:2.64</Fit><Arrow ml={11} c={C.yellow} />
          </IndRow>
          <ExpmaChart />
          <IndRow>
            <Pill $w={139}><Fit w={100} size={34}>MACD</Fit><Down /></Pill>
            <Fit w={130} size={36} ml={2} color={C.ink}>DIF:0.20</Fit><Arrow ml={11} />
            <Fit w={140} size={36} ml={18} color={C.yellow}>DEA:0.21</Fit><Arrow ml={11} dir="down" c={C.yellow} />
            <Fit w={122} size={36} ml={17} color={C.violet}>M:<Dash />0.01</Fit><Arrow ml={10} c={C.violet} />
          </IndRow>
          <MacdChart />
          <IndRow>
            <Pill $w={139}><Fit w={98} size={33}>成交量</Fit><Down /></Pill>
            <Fit squeeze w={64} size={36} ml={4} color={C.ink}>83.37万</Fit><Arrow ml={6} w={9} />
            <Fit squeeze w={108} size={36} ml={9} color={C.yellow}>MA1:60.13万</Fit><Arrow ml={3} w={9} c={C.yellow} />
            <Fit squeeze w={111} size={36} ml={9} color={C.violet}>MA2:72.98万</Fit><Arrow ml={5} w={9} dir="down" c={C.violet} />
            <Fit squeeze w={110} size={36} ml={9} color={C.green}>MA3:142.4万</Fit><Arrow ml={4} w={9} c={C.green} />
          </IndRow>
          <VolumeChart />
          <Dates><Fit w={150} size={36.5}>20241011</Fit><Fit w={147} size={36.5}>20251117</Fit></Dates>
        </LeftCol>
        <RightCol>
          <ChipChart />
          <Legend><Swatch $c="#5bb945" />套牢<Swatch $c="#e84a48" $ml={33} />获利</Legend>
          <StatBlock>
            <Stat>获利比例：<Fit w={98} size={28.5} color={C.ink}>60.25%</Fit></Stat>
            <Stat>平均成本：<Fit w={58} size={28.5} color={C.ink}>2.96</Fit></Stat>
            <Stat>90%成本：<Fit w={130} size={28.5} color={C.ink}>2.52<Dash />3.36</Fit></Stat>
            <Stat>集中度：<Fit w={93} size={28.5} color={C.ink}>14.29%</Fit></Stat>
          </StatBlock>
          <StatFoot>
            <Stat $c="#999"><InfoLabel>说明<InfoDot>i</InfoDot></InfoLabel><Fit w={160} size={28.5}>2025<Dash />02<Dash />21</Fit></Stat>
          </StatFoot>
        </RightCol>
        <VLine /><HLine />
        <TradeFlag $x={299} $y={15} $bg="rgba(244,88,88,.6)"><Fit w={161} size={36}>均价3.080</Fit><Fit w={206} size={36} ml={20}>买入23000股</Fit></TradeFlag>
        <TradeFlag $x={300} $y={80} $bg="rgba(102,158,230,.6)"><Fit w={161} size={36}>均价3.000</Fit><Fit w={206} size={36} ml={20}>卖出23000股</Fit></TradeFlag>
        <PriceTag><Fit w={87} size={36}>12.99</Fit></PriceTag>
        <NextBtn><svg width="20" height="28" viewBox="0 0 20 28"><path d="M5 3L16 14L5 25" fill="none" stroke="#fff" strokeWidth="3.4" strokeLinecap="round" /></svg></NextBtn>
        <DateTag><Fit w={153} size={37}>20250221</Fit></DateTag>
      </ChartArea>
    </>
  );
}

function Footer() {
  const s = { fill: 'none', stroke: '#666', strokeWidth: 2.6 };
  return (
    <>
      <Promo>
        <svg width="42" height="38" viewBox="0 0 42 38" fill={C.orange}><path d="M0 11H4V26H0ZM8 10L36 3V0H41V37H36V34L28 31V34H20L18 29H15L8 27Z" /></svg>
        <Fit w={759} size={36.5} ml={49} color="#d95a18">免费模拟交易赢真现金，上周已有人提现2000元</Fit>
        <Divider /><Cross w={32} h={30} c="#dd6a30" sw={2.6} />
      </Promo>
      <Strip />
      <BottomBar>
        <IndexBox>
          <IndexCaret><svg width="19" height="8"><path d="M0 8L9.500 0L19 8Z" fill="#777" /></svg></IndexCaret>
          <IndexVal><Fit w={159} size={45} color={C.green}>3939.81</Fit></IndexVal>
          <IndexRow>上证<Fit w={112} size={35} ml={32} color={C.green}><Dash />0.81%</Fit></IndexRow>
        </IndexBox>
        <NavItem>
          <svg width="62" viewBox="0 0 62 56" {...s}>
            <path d="M15 9A26 26 0 0 1 53 43" /><path d="M47 49A26 26 0 0 1 7 18" /><path d="M0 21L9 16L11 24M51 36L53 43L62 37" />
            <path d="M22 15L31 27L40 15M31 27V43M21 28H41M21 36H41" />
          </svg>交易
        </NavItem>
        <NavItem>
          <svg width="54" viewBox="0 0 54 56" {...s}>
            <path d="M34 3H8Q2 3 2 9V46Q2 52 8 52H44Q50 52 50 46V20" /><path d="M20 34L45 9L50 3M18 36L44 11" strokeWidth="3.4" />
          </svg>发帖
        </NavItem>
        <NavItem>
          <svg width="52" viewBox="0 0 52 56" {...s}>
            <rect x="3" y="5" width="20" height="20" rx="4" /><rect x="3" y="30" width="20" height="20" rx="4" /><rect x="28" y="30" width="20" height="20" rx="4" />
            <path d="M36.500 5L38 3.600L39.500 5L48 14L48 16L39.500 25.500L38 26.500L36.500 25.500L28 16V14Z" />
          </svg>功能
        </NavItem>
        <NavItem>
          <svg width="56" viewBox="0 0 56 56" {...s}>
            <circle cx="28" cy="28" r="25" />{[17.5, 28, 38.5].map(x => <circle key={x} cx={x} cy="28" r="2.6" fill="#666" stroke="none" />)}
          </svg>设自选
        </NavItem>
      </BottomBar>
      <SysNav>
        <SysPill><svg width="38" height="36"><path d="M2 3H36M2 18H36M2 33H36" stroke="#333" strokeWidth="3.600" strokeLinecap="round" /></svg></SysPill>
        <SysKey $w={266}><svg width="40" height="40"><rect x="2.500" y="2.500" width="35" height="35" rx="10" fill="none" stroke="#333" strokeWidth="3.600" /></svg></SysKey>
        <SysKey $w={221}><svg width="24" height="36"><path d="M21 1L3 18L21 35" fill="none" stroke="#333" strokeWidth="3.200" /></svg></SysKey>
      </SysNav>
    </>
  );
}

export default function App() {
  return (
    <Page>
      <Global />
      <Status />
      <Sheet>
        <Head />
        <QuoteBlock />
        <AfterHours>
          <span>盘后固定价格:<Empty gap={15} /></span><span>量:<Empty /></span><span>额:<Empty gap={10} /></span><span>盘后分时</span>
          <Toggle><Knob /></Toggle>
          <svg width="28" height="18"><path d="M1 1.500L14 15L27 1.500" fill="none" stroke="#999" strokeWidth="2" /></svg>
        </AfterHours>
        <Notice>
          <svg width="50" height="42" viewBox="0 0 50 42" fill="none" stroke="#e06a22" strokeWidth="3" strokeLinejoin="round">
            <path d="M22 3L12 11H5Q3 11 3 13V29Q3 31 5 31H12L22 39Z" /><path d="M29 11A12 12 0 0 1 29 31M30 3A19 19 0 0 1 30 39" />
          </svg>
          <Fit w={823} size={36} ml={28}>停复牌<TightColon>：</TightColon>自2025<Dash />11<Dash />18连续停牌,停牌原因<TightColon>：</TightColon>交易异...</Fit>
          <RedDot /><Cross w={27} h={27} c="#a5a5a5" />
        </Notice>
        <Tabs>
          <Tab>分时</Tab><Tab>五日</Tab><Tab>日K</Tab><Tab $active>周K</Tab><Tab>月K</Tab>
          <Tab>更多<Down c="#666" /></Tab>
          <TabIcon>
            <svg width="50" height="50" viewBox="0 0 50 50" fill="none" stroke="#666" strokeWidth="3.200" strokeLinejoin="round">
              <path d="M21 2H29L31 8.500L37 12L43.500 10.500L47.500 17.500L43 22V28L47.500 32.500L43.500 39.500L37 38L31 41.500L29 48H21L19 41.500L13 38L6.500 39.500L2.500 32.500L7 28V22L2.500 17.500L6.500 10.500L13 12L19 8.500Z" />
              <circle cx="25" cy="25" r="8" />
            </svg>
          </TabIcon>
        </Tabs>
        <Charts />
        <Footer />
      </Sheet>
    </Page>
  );
}
